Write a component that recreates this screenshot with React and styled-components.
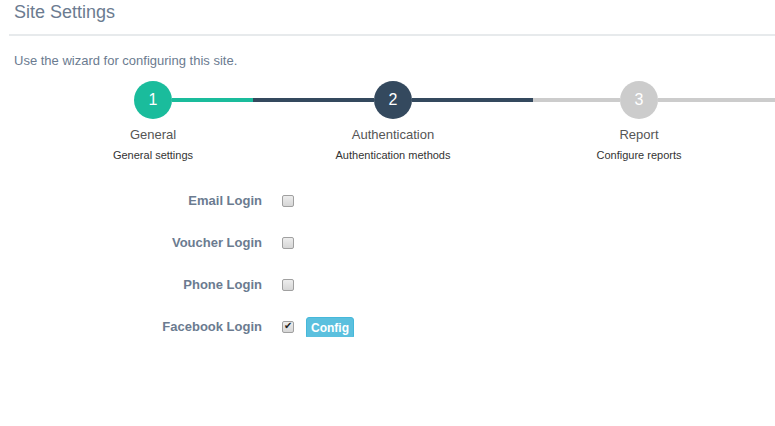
import React from 'react';
import styled, { createGlobalStyle } from 'styled-components';

const GlobalStyle = createGlobalStyle`
  body {
    margin: 0;
    background: #fff;
    font-family: "Liberation Sans", Arial, sans-serif;
  }
`;

const Page = styled.div`
  margin-left: 9px;
  width: 766px;
`;

const Header = styled.h1`
  margin: 0;
  padding-left: 5px;
  height: 34px;
  font-size: 18px;
  line-height: 24px;
  font-weight: normal;
  color: #6b7b90;
  border-bottom: 2px solid #e7eaec;
`;

const Intro = styled.p`
  margin: 16px 0 0;
  padding-left: 5px;
  font-size: 13px;
  line-height: 18px;
  color: #6b7b90;
`;

const Wizard = styled.div`
  display: flex;
  align-items: flex-start;
  margin-top: 11px;
  padding-left: 44px;
`;

const Step = styled.div`
  display: flex;
  flex-direction: column;
  align-items: center;
  width: ${p => p.width}px;
`;

const Track = styled.div`
  display: flex;
  align-items: center;
  width: 100%;
  height: 38px;
`;

const Line = styled.div`
  flex: 1;
  height: 4px;
  background: ${p => p.color || 'transparent'};
`;

const Tail = styled(Line)`
  margin-top: 17px;
`;

const Circle = styled.div`
  width: 38px;
  height: 38px;
  border-radius: 50%;
  background: ${p => p.color};
  color: #fff;
  font-size: 16px;
  display: flex;
  align-items: center;
  justify-content: center;
  flex-shrink: 0;
`;

const StepTitle = styled.div`
  margin-top: 7px;
  font-size: 13px;
  line-height: 18px;
  color: #555;
`;

const StepInfo = styled.div`
  margin-top: 3px;
  font-size: 11px;
  line-height: 16px;
  color: #333;
`;

const Form = styled.div`
  margin-top: 28px;
  display: grid;
  grid-template-columns: 253px auto;
  column-gap: 20px;
  row-gap: 22px;
`;

const Label = styled.label`
  text-align: right;
  font-size: 13px;
  font-weight: bold;
  line-height: 20px;
  color: #6b7b90;
`;

const Controls = styled.div`
  display: flex;
  align-items: center;
  gap: 12px;
  height: 20px;
`;

const Check = styled.input`
  appearance: none;
  margin: 0;
  width: 12px;
  height: 12px;
  border: 1px solid #a0a0a0;
  border-radius: 2px;
  background: linear-gradient(#ededed, #d6d6d6);
  position: relative;
  &:checked::after {
    content: '✔';
    position: absolute;
    left: 1px;
    top: -2px;
    font-size: 10px;
    color: #222;
  }
`;

const Button = styled.button`
  font-family: inherit;
  font-size: 12px;
  font-weight: bold;
  line-height: 18px;
  padding: 1px 4px;
  margin-top: 2px;
  color: #fff;
  background: #5bc0de;
  border: 1px solid #46b8da;
  border-radius: 3px;
`;

const teal = '#1abc9c';
const navy = '#34495e';
const grey = '#cccccc';

const steps = [
  { n: 1, title: 'General', info: 'General settings', width: 200, color: teal, left: null, right: teal },
  { n: 2, title: 'Authentication', info: 'Authentication methods', width: 280, color: navy, left: navy, right: navy },
  { n: 3, title: 'Report', info: 'Configure reports', width: 212, color: grey, left: grey, right: grey },
];

const logins = [
  { name: 'Email Login', on: false },
  { name: 'Voucher Login', on: false },
  { name: 'Phone Login', on: false },
  { name: 'Facebook Login', on: true },
];

export default function App() {
  return (
    <Page>
      <GlobalStyle />
      <Header>Site Settings</Header>
      <Intro>Use the wizard for configuring this site.</Intro>
      <Wizard>
        {steps.map(s => (
          <Step key={s.n} width={s.width}>
            <Track>
              <Line color={s.left} />
              <Circle color={s.color}>{s.n}</Circle>
              <Line color={s.right} />
            </Track>
            <StepTitle>{s.title}</StepTitle>
            <StepInfo>{s.info}</StepInfo>
          </Step>
        ))}
        <Tail color={grey} />
      </Wizard>
      <Form>
        {logins.map(l => (
          <React.Fragment key={l.name}>
            <Label>{l.name}</Label>
            <Controls>
              <Check type="checkbox" defaultChecked={l.on} />
              {l.on && <Button>Config</Button>}
            </Controls>
          </React.Fragment>
        ))}
      </Form>
    </Page>
  );
}
